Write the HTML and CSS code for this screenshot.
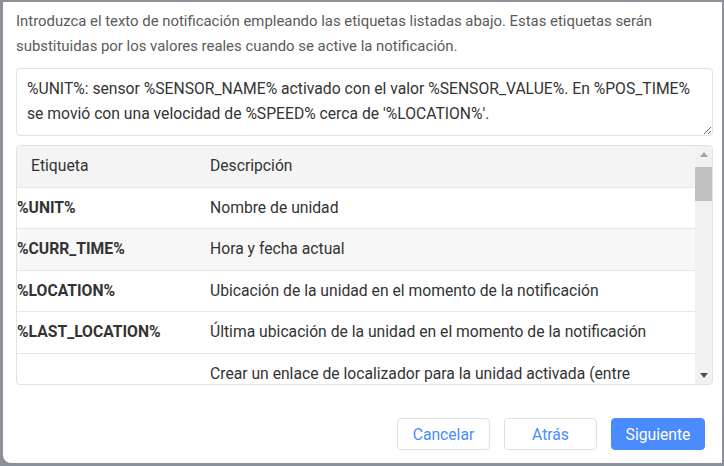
FILE: index.html
```html
<!DOCTYPE html>
<html lang="es">
<head>
<meta charset="utf-8">
<link rel="stylesheet" href="styles.css">
</head>
<body>
<div class="dialog">
  <p class="intro">Introduzca el texto de notificación empleando las etiquetas listadas abajo. Estas etiquetas serán substituidas por los valores reales cuando se active la notificación.</p>
  <textarea class="msg">%UNIT%: sensor %SENSOR_NAME% activado con el valor %SENSOR_VALUE%. En %POS_TIME% se movió con una velocidad de %SPEED% cerca de '%LOCATION%'.</textarea>
  <div class="tags">
    <div class="tags-scroll">
      <table>
        <colgroup><col class="c1"><col></colgroup>
        <thead>
          <tr><th>Etiqueta</th><th>Descripción</th></tr>
        </thead>
        <tbody>
          <tr><td class="tag">%UNIT%</td><td>Nombre de unidad</td></tr>
          <tr class="hover"><td class="tag">%CURR_TIME%</td><td>Hora y fecha actual</td></tr>
          <tr><td class="tag">%LOCATION%</td><td>Ubicación de la unidad en el momento de la notificación</td></tr>
          <tr><td class="tag">%LAST_LOCATION%</td><td>Última ubicación de la unidad en el momento de la notificación</td></tr>
          <tr><td class="tag">%LOCATOR_LINK(60,T)%</td><td>Crear un enlace de localizador para la unidad activada (entre paréntesis se indica el tiempo de vida del enlace en minutos y los parámetros de visualización: T – mostrar pistas, S – mostrar sensores, N – mostrar notificaciones, G – mostrar geocercas)</td></tr>
          <tr><td class="tag">%ZONE_MIN%</td><td>La geocerca más pequeña en la que se encuentra la unidad</td></tr>
          <tr><td class="tag">%ZONES_ALL%</td><td>Todas las geocercas en las que se encuentra la unidad</td></tr>
          <tr><td class="tag">%SPEED%</td><td>Velocidad de la unidad</td></tr>
          <tr><td class="tag">%POS_TIME%</td><td>Hora y fecha del último mensaje con posición</td></tr>
          <tr><td class="tag">%MSG_TIME%</td><td>Hora y fecha del mensaje que activó la notificación</td></tr>
          <tr><td class="tag">%DRIVER%</td><td>Nombre del conductor</td></tr>
          <tr><td class="tag">%TRAILER%</td><td>Nombre del remolque</td></tr>
        </tbody>
      </table>
    </div>
    <div class="vscroll" aria-hidden="true">
      <span class="arrow up"></span>
      <span class="thumb"></span>
      <span class="arrow down"></span>
    </div>
  </div>
  <div class="actions">
    <button class="btn">Cancelar</button>
    <button class="btn">Atrás</button>
    <button class="btn primary">Siguiente</button>
  </div>
</div>
</body>
</html>
```
FILE: styles.css
```css
html, body {
  margin: 0;
  padding: 0;
  height: 100%;
}
body {
  background: #8b9099;
  font-family: Roboto, "Liberation Sans", sans-serif;
  font-size: 15.7px;
  overflow: hidden;
}
.dialog {
  box-sizing: border-box;
  margin: 2px 0 0 3px;
  width: 719px;
  height: 461px;
  background: #fff;
  border-radius: 0 0 0 8px;
  padding: 7px 9px 0 13px;
  display: flex;
  flex-direction: column;
}
.intro {
  margin: 0;
  color: #5a5a5a;
  font-size: 14.9px;
  line-height: 25px;
}
.msg {
  box-sizing: border-box;
  margin-top: 9px;
  width: 697px;
  height: 68px;
  border: 1px solid #e2e2e2;
  border-radius: 4px;
  padding: 7px 10px;
  font-family: inherit;
  font-size: 15.7px;
  line-height: 25px;
  color: #333;
  resize: vertical;
  outline: none;
}
.tags {
  position: relative;
  box-sizing: border-box;
  margin-top: 9px;
  width: 697px;
  height: 240px;
  border: 1px solid #e2e2e2;
  border-radius: 4px;
  overflow: hidden;
}
.tags-scroll {
  height: 100%;
  overflow: hidden;
  padding-right: 17px;
}
.vscroll {
  position: absolute;
  top: 0;
  right: 0;
  bottom: 0;
  width: 17px;
  background: #f1f1f1;
  display: flex;
  flex-direction: column;
}
.arrow {
  height: 17px;
  display: flex;
  align-items: center;
  justify-content: center;
}
.arrow::before {
  content: "";
  width: 0;
  height: 0;
  border-left: 4.5px solid transparent;
  border-right: 4.5px solid transparent;
}
.arrow.up::before {
  border-bottom: 5px solid #a3a3a3;
}
.arrow.down {
  margin-top: auto;
}
.arrow.down::before {
  border-top: 5px solid #505050;
}
.thumb {
  margin-top: 4px;
  height: 34px;
  background: #c1c1c1;
}
table {
  width: 100%;
  table-layout: fixed;
  border-collapse: collapse;
  color: #333;
  font-size: 15.7px;
}
.c1 {
  width: 179px;
}
th, td {
  text-align: left;
  font-weight: normal;
  padding: 10px 14px;
  line-height: 20.5px;
  vertical-align: middle;
  border-bottom: 1px solid #e6e6e6;
}
thead th {
  background: #f4f4f4;
}
td.tag {
  padding-left: 0;
  font-weight: bold;
  overflow-wrap: anywhere;
}
tr.hover td {
  background: #f7f7f7;
}
.actions {
  margin-top: auto;
  margin-bottom: 13px;
  display: flex;
  justify-content: flex-end;
  gap: 14px;
  padding-right: 8px;
}
.btn {
  box-sizing: border-box;
  width: 93px;
  height: 32px;
  border: 1px solid #e0e0e0;
  border-radius: 4px;
  background: #fff;
  color: #4a8cff;
  font-family: inherit;
  font-size: 15.7px;
}
.btn.primary {
  width: 94px;
  background: #4a8cff;
  border-color: #4a8cff;
  color: #fff;
}
```
